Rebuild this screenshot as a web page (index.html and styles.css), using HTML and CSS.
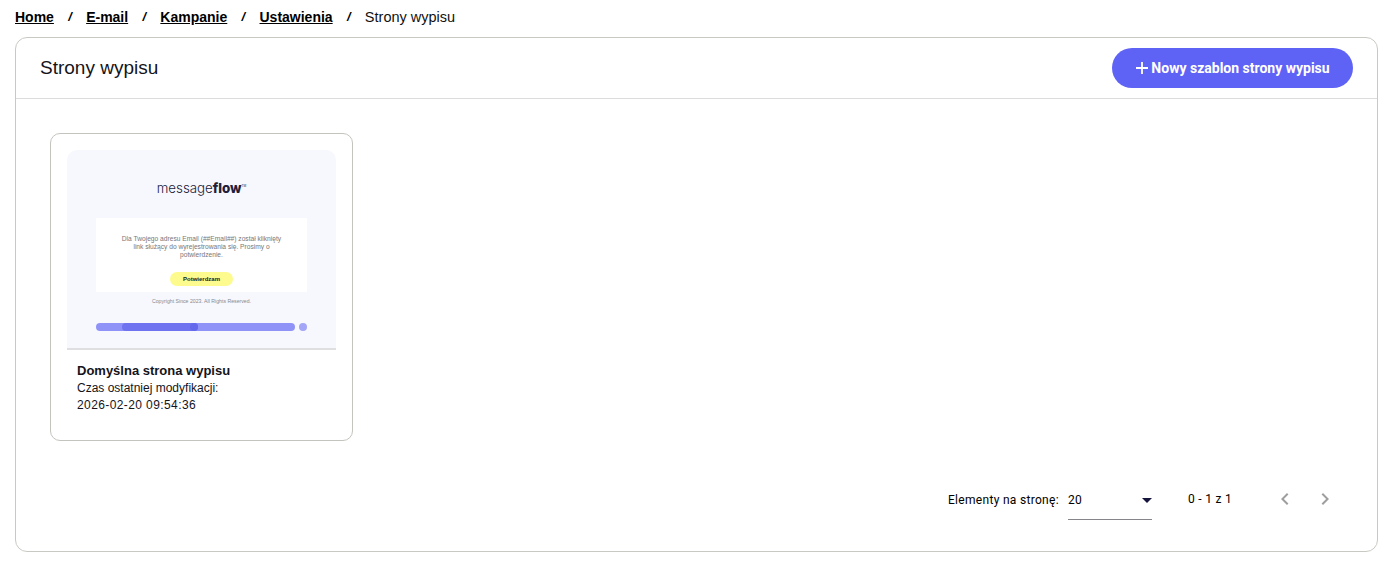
FILE: index.html
```html
<!DOCTYPE html>
<html lang="pl">
<head>
    <meta charset="UTF-8">
    <meta name="viewport" content="width=device-width, initial-scale=1.0">
    <title>Strony wypisu</title>
    <link rel="stylesheet" href="styles.css">
</head>
<body>

    <!-- Okruszki -->
    <nav class="breadcrumbs">
        <a href="#">Home</a>
        <span class="sep">/</span>
        <a href="#">E-mail</a>
        <span class="sep">/</span>
        <a href="#">Kampanie</a>
        <span class="sep">/</span>
        <a href="#">Ustawienia</a>
        <span class="sep">/</span>
        <span class="current">Strony wypisu</span>
    </nav>

    <div class="panel">
        <div class="panel-header">
            <h1>Strony wypisu</h1>
            <button class="btn-new" type="button">
                <svg class="plus" width="14" height="14" viewBox="0 0 14 14"><path d="M7 1v12M1 7h12" stroke="#fff" stroke-width="1.8" fill="none"/></svg>
                Nowy szablon strony wypisu
            </button>
        </div>

        <div class="panel-body">
            <div class="card">
                <!-- Miniatura szablonu -->
                <div class="thumb">
                    <div class="thumb-logo"><span class="light">message</span><span class="bold">flow</span><sup>TM</sup></div>
                    <div class="thumb-box">
                        <p>Dla Twojego adresu Email (##Email##) został kliknięty link służący do wyrejestrowania się. Prosimy o potwierdzenie.</p>
                        <span class="thumb-btn">Potwierdzam</span>
                    </div>
                    <div class="thumb-copy">Copyright Since 2023. All Rights Reserved.</div>
                    <div class="thumb-bars">
                        <div class="thumb-bar"><div class="thumb-bar-dark"></div></div>
                        <div class="thumb-dot"></div>
                    </div>
                </div>
                <div class="card-info">
                    <div class="card-title">Domyślna strona wypisu</div>
                    <div>Czas ostatniej modyfikacji:</div>
                    <div class="card-date">2026-02-20 09:54:36</div>
                </div>
            </div>
        </div>

        <!-- Paginacja -->
        <div class="paginator">
            <span class="page-label">Elementy na stronę:</span>
            <div class="page-select">
                <span>20</span>
                <span class="arrow"></span>
            </div>
            <span class="page-range">0 - 1 z 1</span>
            <div class="page-nav">
                <svg width="24" height="24" viewBox="0 0 24 24"><path d="M15.41 7.41 14 6l-6 6 6 6 1.41-1.41L10.83 12z" fill="#9e9e9e"/></svg>
                <svg width="24" height="24" viewBox="0 0 24 24"><path d="M10 6 8.59 7.41 13.17 12l-4.58 4.59L10 18l6-6z" fill="#9e9e9e"/></svg>
            </div>
        </div>
    </div>

</body>
</html>
```

FILE: styles.css
```css
/* Ogolne */
* {
    margin: 0;
    padding: 0;
    box-sizing: border-box;
}

body {
    background-color: #fff;
    color: #14141a;
    font-family: 'Liberation Sans', sans-serif;
    padding: 0 11px 0 15px;
}

/* Okruszki */
.breadcrumbs {
    display: flex;
    align-items: center;
    height: 37px;
    padding-bottom: 4px;
    font-size: 14px;
}

.breadcrumbs a {
    color: #000;
    font-weight: 700;
}

.breadcrumbs .sep {
    margin: 0 14.3px;
    font-weight: 700;
    font-style: italic;
    font-size: 13px;
    color: #000;
}

.breadcrumbs .current {
    color: #111;
    font-size: 14.5px;
}

/* Panel */
.panel {
    border: 1px solid #c9c9c4;
    border-radius: 12px;
    height: 515px;
    display: flex;
    flex-direction: column;
}

.panel-header {
    flex: none;
    display: flex;
    align-items: center;
    justify-content: space-between;
    height: 61px;
    padding: 0 24px;
    border-bottom: 1px solid #dcdcdc;
}

h1 {
    font-size: 19px;
    font-weight: 400;
}

.btn-new {
    display: flex;
    align-items: center;
    justify-content: center;
    gap: 2px;
    width: 241px;
    height: 40px;
    border: none;
    border-radius: 20px;
    background-color: #5f63f5;
    color: #fff;
    font-family: 'Roboto', sans-serif;
    font-size: 14px;
    font-weight: 700;
}

.panel-body {
    flex: 1;
    min-height: 0;
    padding: 34px;
}

/* Karta szablonu */
.card {
    width: 303px;
    height: 308px;
    border: 1px solid #c4c4be;
    border-radius: 10px;
    padding: 16px;
}

.thumb {
    height: 200px;
    background-color: #f7f8fd;
    border-radius: 10px 10px 0 0;
    border-bottom: 2px solid #dfdfe2;
    padding: 27px 29px 0;
    display: flex;
    flex-direction: column;
}

.thumb-logo {
    height: 41px;
    flex-shrink: 0;
    text-align: center;
    font-family: 'Inter', sans-serif;
    font-size: 13.3px;
    line-height: 18px;
    color: #20203a;
}

.thumb-logo .light {
    font-weight: 300;
}

.thumb-logo .bold {
    font-weight: 800;
}

.thumb-logo sup {
    font-size: 3px;
    vertical-align: 6px;
}

.thumb-box {
    height: 74px;
    flex-shrink: 0;
    background-color: #fff;
    padding: 17px 24px 0;
    text-align: center;
}

.thumb-box p {
    font-size: 6.65px;
    line-height: 8px;
    color: #77777a;
    margin-bottom: 8px;
}

.thumb-btn {
    display: inline-block;
    width: 63px;
    height: 14px;
    line-height: 14px;
    border-radius: 7px;
    background-color: #fdfb8e;
    color: #222;
    font-size: 6px;
    font-weight: 700;
}

.thumb-copy {
    margin-top: 6px;
    text-align: center;
    font-size: 5.2px;
    line-height: 6px;
    color: #88888c;
}

.thumb-bars {
    display: flex;
    align-items: center;
    justify-content: space-between;
    margin-top: 19px;
}

.thumb-bar {
    width: 199px;
    height: 8px;
    border-radius: 4px;
    background-color: #8f92f6;
    padding-left: 26px;
}

.thumb-bar-dark {
    display: flex;
    justify-content: flex-end;
    width: 76px;
    height: 8px;
    border-radius: 4px;
    background-color: #7073f0;
}

.thumb-bar-dark::after {
    content: "";
    width: 8px;
    height: 8px;
    border-radius: 50%;
    background-color: #6468ea;
}

.thumb-dot {
    width: 8px;
    height: 8px;
    border-radius: 50%;
    background-color: #a3a5f7;
}

.card-info {
    padding: 11px 10px 0;
    font-size: 12px;
    line-height: 17px;
}

.card-title {
    font-size: 13px;
    font-weight: 700;
    line-height: 19px;
}

.card-date {
    letter-spacing: 0.4px;
}

/* Paginacja */
.paginator {
    flex: none;
    display: flex;
    align-items: flex-start;
    height: 80px;
    padding-left: 932px;
    font-family: 'Roboto', sans-serif;
    font-size: 12px;
    letter-spacing: 0.3px;
    color: #000;
}

.page-label {
    margin-top: 22px;
    width: 120px;
}

.page-select {
    width: 84px;
    height: 49px;
    padding-top: 22px;
    border-bottom: 1px solid #85858a;
    display: flex;
    justify-content: space-between;
    align-items: flex-start;
}

.page-select .arrow {
    margin-top: 5px;
    border-left: 5px solid transparent;
    border-right: 5px solid transparent;
    border-top: 5px solid #14143c;
}

.page-range {
    margin-left: 36px;
    margin-top: 21px;
    width: 85px;
}

.page-nav {
    display: flex;
    gap: 16px;
    margin-top: 16px;
}
```
